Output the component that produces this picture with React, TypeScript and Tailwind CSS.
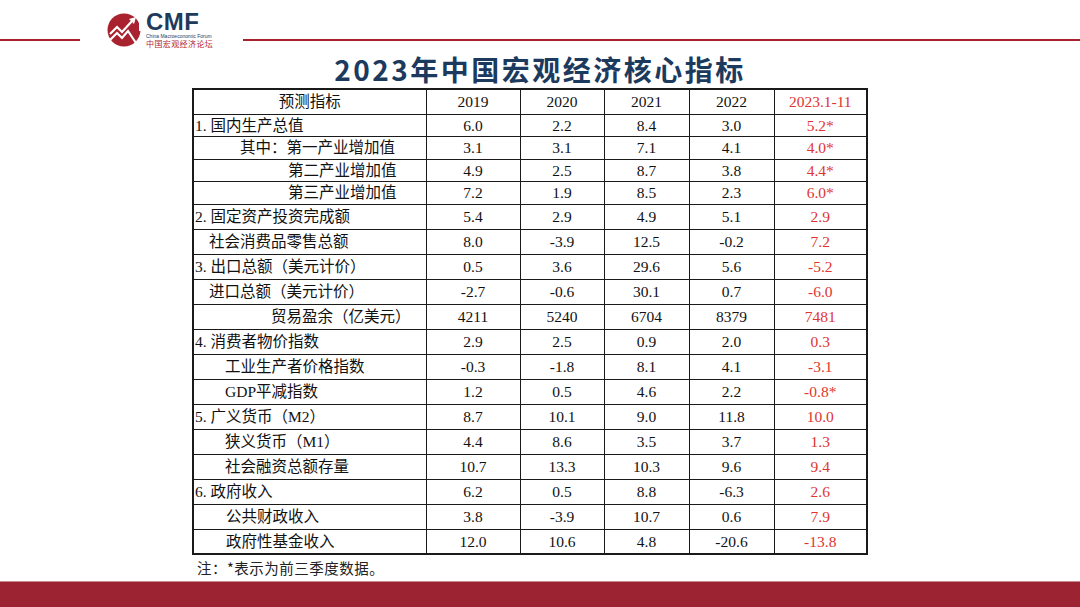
import React from 'react';

type Row = {
  label: string;
  indent: number;
  h: number;
  values: string[];
  latest: string;
};

const rows: Row[] = [
  { label: '1. 国内生产总值', indent: 1, h: 22.5, values: ['6.0', '2.2', '8.4', '3.0'], latest: '5.2*' },
  { label: '其中：第一产业增加值', indent: 46, h: 22.5, values: ['3.1', '3.1', '7.1', '4.1'], latest: '4.0*' },
  { label: '第二产业增加值', indent: 94, h: 22.5, values: ['4.9', '2.5', '8.7', '3.8'], latest: '4.4*' },
  { label: '第三产业增加值', indent: 94, h: 22.5, values: ['7.2', '1.9', '8.5', '2.3'], latest: '6.0*' },
  { label: '2. 固定资产投资完成额', indent: 1, h: 25, values: ['5.4', '2.9', '4.9', '5.1'], latest: '2.9' },
  { label: '社会消费品零售总额', indent: 15, h: 25, values: ['8.0', '-3.9', '12.5', '-0.2'], latest: '7.2' },
  { label: '3. 出口总额（美元计价）', indent: 1, h: 25, values: ['0.5', '3.6', '29.6', '5.6'], latest: '-5.2' },
  { label: '进口总额（美元计价）', indent: 15, h: 25, values: ['-2.7', '-0.6', '30.1', '0.7'], latest: '-6.0' },
  { label: '贸易盈余（亿美元）', indent: 77, h: 25, values: ['4211', '5240', '6704', '8379'], latest: '7481' },
  { label: '4. 消费者物价指数', indent: 1, h: 25, values: ['2.9', '2.5', '0.9', '2.0'], latest: '0.3' },
  { label: '工业生产者价格指数', indent: 31, h: 25, values: ['-0.3', '-1.8', '8.1', '4.1'], latest: '-3.1' },
  { label: 'GDP平减指数', indent: 31, h: 25, values: ['1.2', '0.5', '4.6', '2.2'], latest: '-0.8*' },
  { label: '5. 广义货币（M2）', indent: 1, h: 25, values: ['8.7', '10.1', '9.0', '11.8'], latest: '10.0' },
  { label: '狭义货币（M1）', indent: 31, h: 25, values: ['4.4', '8.6', '3.5', '3.7'], latest: '1.3' },
  { label: '社会融资总额存量', indent: 31, h: 25, values: ['10.7', '13.3', '10.3', '9.6'], latest: '9.4' },
  { label: '6. 政府收入', indent: 1, h: 25, values: ['6.2', '0.5', '8.8', '-6.3'], latest: '2.6' },
  { label: '公共财政收入', indent: 32, h: 25, values: ['3.8', '-3.9', '10.7', '0.6'], latest: '7.9' },
  { label: '政府性基金收入', indent: 32, h: 25, values: ['12.0', '10.6', '4.8', '-20.6'], latest: '-13.8' },
];

const cellFont = { fontFamily: '"Liberation Serif", "Noto Sans CJK SC", serif' };

function Logo() {
  return (
    <div className="flex items-center gap-[4px] self-start mt-[12px]">
      <svg width="35" height="34" viewBox="0 0 35 34">
        <circle cx="17" cy="17" r="16.5" fill="#a8232f" />
        <polyline points="3,21 10,14 15,19 26,7" fill="none" stroke="#fff" strokeWidth="2.2" strokeLinejoin="miter" />
        <polygon points="22,6 29,4 27,11" fill="#fff" />
        <polyline points="3,27 10,20 15,25 21,18 29,30" fill="none" stroke="#fff" strokeWidth="2.2" strokeLinejoin="miter" />
        <rect x="32" y="8" width="3" height="10" fill="#fff" />
      </svg>
      <div className="flex flex-col leading-none">
        <span
          className="text-[24px] font-bold text-[#1f3b5c] leading-[20px] tracking-[0.5px]"
          style={{ fontFamily: '"Liberation Sans", Arial, sans-serif' }}
        >
          CMF
        </span>
        <span
          className="text-[5px] text-[#1f3b5c] mt-[1px] leading-[6px]"
          style={{ fontFamily: '"Liberation Sans", Arial, sans-serif' }}
        >
          China Macroeconomic Forum
        </span>
        <span
          className="text-[8px] text-[#b3262f] leading-[9px] tracking-[0.4px]"
          style={{ fontFamily: '"Noto Sans CJK SC", sans-serif' }}
        >
          中国宏观经济论坛
        </span>
      </div>
    </div>
  );
}

export default function App() {
  return (
    <div className="w-[1080px] h-[607px] bg-white flex flex-col overflow-hidden">
      {/* Header */}
      <div className="h-[50px] flex items-start">
        <div className="w-[80px] h-[1.5px] bg-[#a8232f] mt-[39px]" />
        <div className="ml-[27px]">
          <Logo />
        </div>
        <div className="flex-1 h-[1.5px] bg-[#a8232f] mt-[39px] ml-[30px]" />
      </div>

      {/* Title */}
      <div className="h-[38px] flex items-center justify-center">
        <h1
          className="text-[28px] font-bold text-[#1c3a5e] tracking-[2.5px] leading-none"
          style={{ fontFamily: '"Noto Sans CJK SC", "Liberation Sans", sans-serif' }}
        >
          2023年中国宏观经济核心指标
        </h1>
      </div>

      {/* Table */}
      <div className="ml-[192px]">
        <table
          className="table-fixed border-collapse border-2 border-[#1a1a1a] text-[15.5px] text-[#111]"
          style={cellFont}
        >
          <colgroup>
            <col className="w-[233px]" />
            <col className="w-[94px]" />
            <col className="w-[84px]" />
            <col className="w-[85px]" />
            <col className="w-[85px]" />
            <col className="w-[93px]" />
          </colgroup>
          <thead>
            <tr className="h-[25px]">
              <th className="border border-[#1a1a1a] font-normal p-0 leading-none">预测指标</th>
              {['2019', '2020', '2021', '2022'].map((y) => (
                <th key={y} className="border border-[#1a1a1a] font-normal p-0 leading-none">
                  {y}
                </th>
              ))}
              <th className="border border-[#1a1a1a] font-normal p-0 leading-none text-[#e0352f]">2023.1-11</th>
            </tr>
          </thead>
          <tbody>
            {rows.map((r) => (
              <tr key={r.label} style={{ height: r.h }}>
                <td className="border border-[#1a1a1a] p-0 leading-none whitespace-nowrap" style={{ paddingLeft: r.indent }}>
                  {r.label}
                </td>
                {r.values.map((v, i) => (
                  <td key={i} className="border border-[#1a1a1a] p-0 leading-none text-center">
                    {v}
                  </td>
                ))}
                <td className="border border-[#1a1a1a] p-0 leading-none text-center text-[#e0352f]">{r.latest}</td>
              </tr>
            ))}
          </tbody>
        </table>
      </div>

      {/* Footnote */}
      <div className="flex-1 flex items-center pl-[197px]">
        <p
          className="text-[14.5px] text-[#222] tracking-[0.5px] leading-none"
          style={{ fontFamily: '"Noto Sans CJK SC", sans-serif' }}
        >
          注：*表示为前三季度数据。
        </p>
      </div>

      {/* Bottom bar */}
      <div className="h-[26px] bg-[#9c2332] border-t border-[#c98a90]" />
    </div>
  );
}
